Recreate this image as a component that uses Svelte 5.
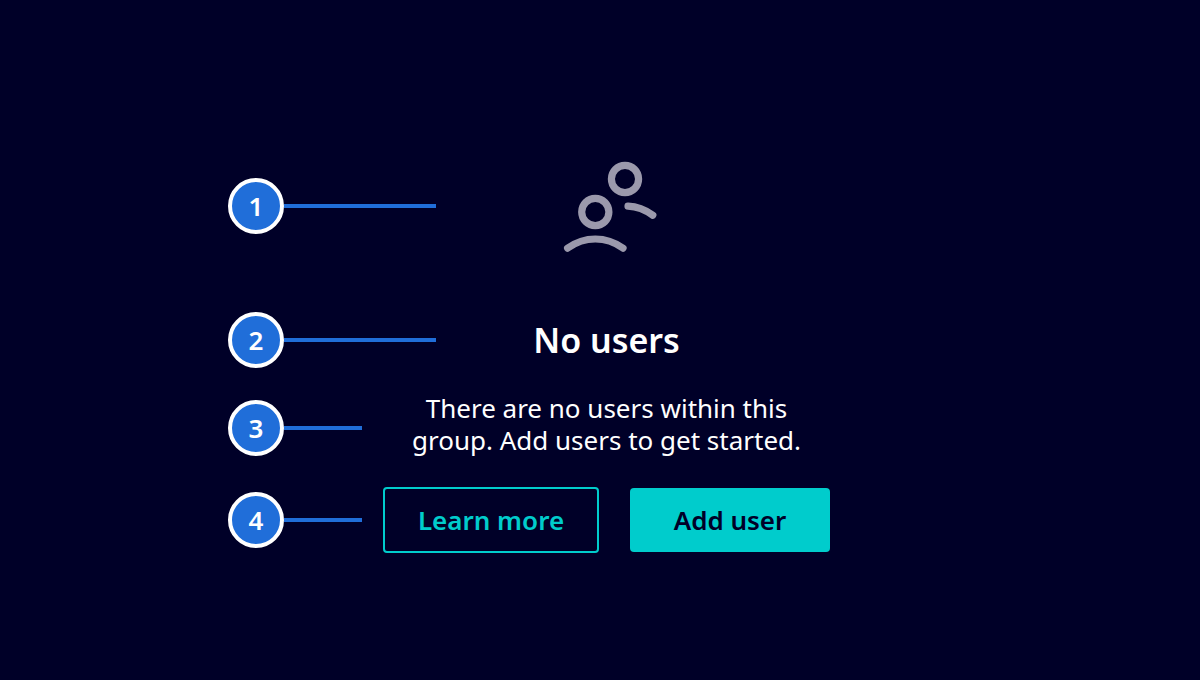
{#snippet marker(number, length)}
  <div class="marker {length}">
    <span class="badge">{number}</span>
    <span class="line"></span>
  </div>
{/snippet}

<main>
  <section class="anatomy" aria-labelledby="title">
    <div class="row">
      {@render marker(1, 'wide')}
      <svg class="icon" viewBox="0 0 96 92" aria-hidden="true">
        <g fill="none" stroke="#9b99ac" stroke-width="7.2" stroke-linecap="round">
          <circle cx="66" cy="19" r="13.6" />
          <circle cx="36.3" cy="52" r="13.6" />
          <path d="M8.6 88.1Q21.5 79 36.3 79T64 88.1" />
          <path d="M69 46.2Q82 46.8 93.8 55.2" />
        </g>
      </svg>
    </div>

    <div class="row title">
      {@render marker(2, 'wide')}
      <h1 id="title">No users</h1>
    </div>

    <div class="row text">
      {@render marker(3, 'short')}
      <p>There are no users within this group. Add users to get started.</p>
    </div>

    <div class="row controls">
      {@render marker(4, 'short')}
      <div class="actions">
        <button class="secondary" type="button">Learn more</button>
        <button class="primary" type="button">Add user</button>
      </div>
    </div>
  </section>
</main>

<style>
  :global(body) {
    margin: 0;
    background: #000028;
  }

  main {
    box-sizing: border-box;
    min-height: 100vh;
    padding: 160px 142px 96px 0;
    color: #ffffff;
    font-family: "Noto Sans", "Open Sans", sans-serif;
    font-size: 26px;
  }

  .row {
    display: grid;
    grid-template-columns: 155px 447px;
    justify-content: center;
    align-items: center;
  }

  .title {
    margin: 60px 0 24px;
  }

  .text {
    align-items: end;
  }

  .controls {
    margin-top: 31px;
  }

  .marker {
    display: flex;
    align-items: center;
  }

  .wide {
    width: 208px;
  }

  .short {
    width: 134px;
  }

  .badge {
    box-sizing: border-box;
    display: grid;
    place-items: center;
    flex: none;
    width: 56px;
    height: 56px;
    border: 4px solid #ffffff;
    border-radius: 50%;
    background: #206ed9;
    font-weight: 600;
    line-height: 32px;
  }

  .line {
    flex: 1;
    height: 4px;
    background: #206ed9;
  }

  .icon {
    justify-self: center;
    width: 96px;
    height: 92px;
    overflow: visible;
  }

  h1 {
    margin: 0;
    font-size: 34px;
    font-weight: 600;
    line-height: 54px;
    text-align: center;
  }

  p {
    justify-self: center;
    max-width: 400px;
    margin: 0;
    line-height: 32px;
    text-align: center;
  }

  .actions {
    display: flex;
    align-items: center;
    gap: 31px;
  }

  button {
    box-sizing: border-box;
    padding: 0;
    border-radius: 4px;
    font: inherit;
    font-weight: 600;
    line-height: 32px;
  }

  .secondary {
    width: 216px;
    height: 66px;
    border: 2px solid #00cccc;
    background: transparent;
    color: #00cccc;
  }

  .primary {
    width: 200px;
    height: 64px;
    border: 0;
    background: #00cccc;
    color: #000028;
  }
</style>
